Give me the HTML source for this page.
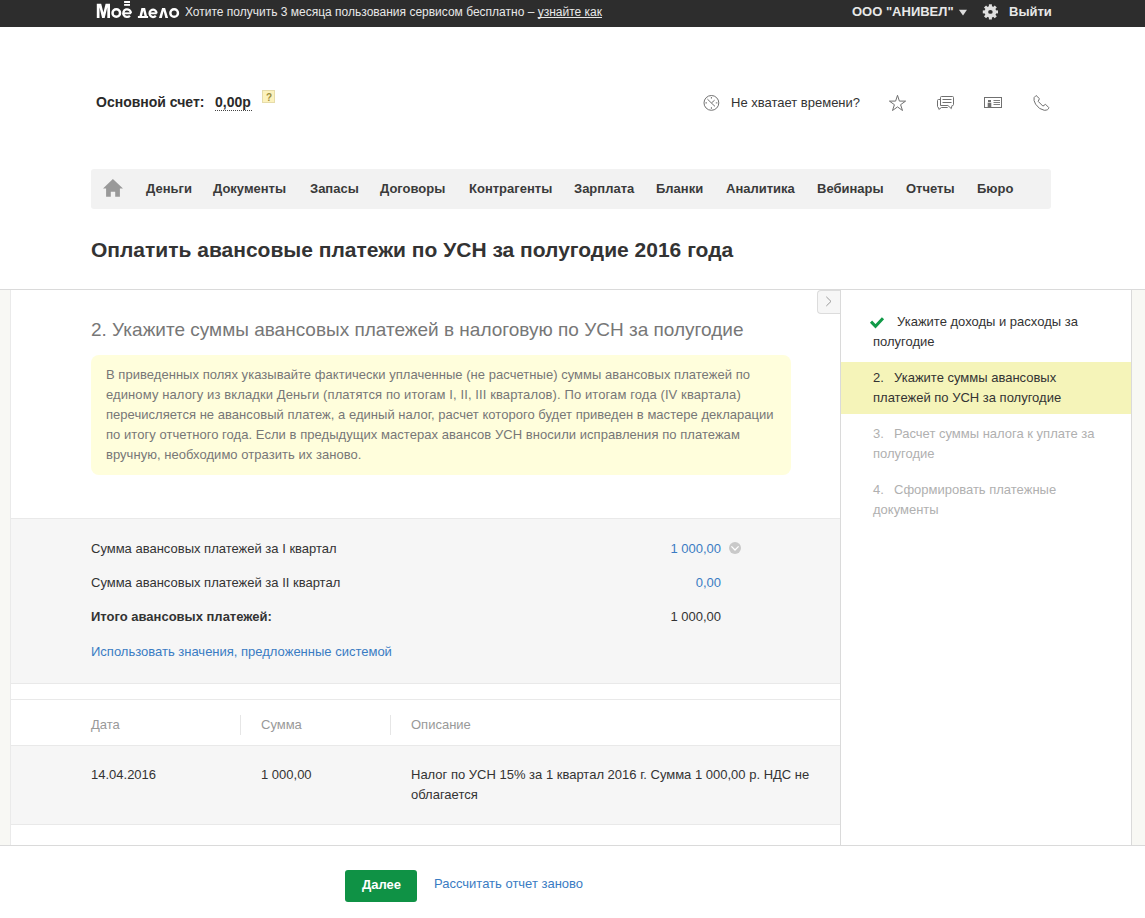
<!DOCTYPE html>
<html><head><meta charset="utf-8">
<style>
*{box-sizing:border-box;margin:0;padding:0}
html,body{width:1145px;height:918px;overflow:hidden;background:#fff;font-family:"Liberation Sans",sans-serif;color:#333}
.abs{position:absolute;white-space:nowrap}
.t13{font-size:13px;line-height:16px}
#top{position:absolute;left:0;top:0;width:1145px;height:27px;background:#2d2d2d}
.promo u{text-decoration-skip-ink:none}
.promo{font-size:12px;color:#e8e8e8;left:185px;top:4px;line-height:16px}
.org{font-size:13px;color:#e8e8e8;left:852px;top:4px;line-height:16px;font-weight:bold}
.exit{font-size:13px;color:#e8e8e8;left:1009px;top:4px;line-height:16px;font-weight:bold}
.acc{font-size:14px;font-weight:bold;color:#2a2a2a;left:96px;top:94px;line-height:16px}
.acc span{position:relative}
.dots{position:absolute;left:215px;top:110px;width:37px;height:1px;border-top:1px dotted #444}
.help{left:262px;top:90px;width:13px;height:13px;background:#fcf2bd;border:1px solid #e6dcaa;font-size:10px;font-weight:bold;color:#9c8c3c;text-align:center;line-height:14px;padding-left:1px}
.time{font-size:13px;color:#333;left:731px;top:95px;line-height:16px}
#nav{position:absolute;left:91px;top:169px;width:960px;height:40px;background:#f2f2f2;border-radius:3px}
.nv{position:absolute;top:181px;font-size:13px;font-weight:bold;color:#3a3a3a;line-height:16px;white-space:nowrap}
h1{position:absolute;left:91px;top:238px;font-size:21px;font-weight:bold;color:#333;line-height:24px;white-space:nowrap}
#hline{position:absolute;left:0;top:289px;width:1145px;height:1px;background:#dadada}
#lstrip{position:absolute;left:0;top:290px;width:11px;height:555px;background:#f8f8f4;border-right:1px solid #eaeaea}
#rstrip{position:absolute;left:1131px;top:290px;width:14px;height:555px;background:#f8f8f4;border-left:1px solid #dadada}
#vline{position:absolute;left:840px;top:290px;width:1px;height:555px;background:#dadada}
#bline{position:absolute;left:0;top:845px;width:1145px;height:1px;background:#dadada}
.h2{font-size:19px;color:#777;left:91px;top:319px;line-height:22px}
#info{position:absolute;left:91px;top:355px;width:700px;height:120px;background:#fffedc;border-radius:8px;padding:10px 15px;font-size:13px;color:#777;line-height:20px;white-space:nowrap}
#gray1{position:absolute;left:11px;top:518px;width:829px;height:166px;background:#f6f6f6;border-top:1px solid #e9e9e9;border-bottom:1px solid #e9e9e9}
.blue{color:#3a7cc3}
#thead{position:absolute;left:11px;top:699px;width:829px;height:47px;border-top:1px solid #e9e9e9;border-bottom:1px solid #e9e9e9;background:#fff}
.th{font-size:13px;color:#999;line-height:16px;top:717px}
.sep{position:absolute;width:1px;height:20px;background:#e6e6e6}
#trow{position:absolute;left:11px;top:746px;width:829px;height:79px;background:#f6f6f6;border-bottom:1px solid #e9e9e9}
.side{font-size:13px;line-height:20px;color:#333}
.side.g{color:#b0b0b0}
.side b{font-weight:normal;display:inline-block;width:21px}
#hl{position:absolute;left:841px;top:362px;width:290px;height:52px;background:#f5f4b9}
#btn{position:absolute;left:345px;top:870px;width:72px;height:32px;background:#0f9245;border-radius:3px}
.btxt{left:362px;top:877px;color:#fff;font-weight:bold;font-size:13px;line-height:16px}
.redo{font-size:13px;color:#3a7cc3;left:434px;top:876px;line-height:16px}
#coll{position:absolute;left:817px;top:290px;width:24px;height:24px;background:#f6f6f6;border:1px solid #dcdcdc;border-right:none;border-radius:4px 0 0 4px}
</style></head><body>
<div id="top">
  <svg class="abs" style="left:0;top:0" width="200" height="27" viewBox="0 0 200 27">
    <g fill="#fff">
      <polygon points="96.8,17.9 96.8,3.8 101.2,3.8 103.4,12.6 105.6,3.8 110,3.8 110,17.9 107.3,17.9 107.3,7.2 104.7,17.9 102.1,17.9 99.5,7.2 99.5,17.9"/>
      <rect x="124.1" y="1" width="5.9" height="2"/>
      <rect x="124.1" y="4" width="5.9" height="1.8"/>
      <path fill-rule="evenodd" d="M141.4,8 L145.1,8 L147,16 L148.1,16 L148.1,18 L137.9,18 L137.9,16 L139.5,16 Z M143.25,10.8 L142,16 L144.5,16 Z"/>
      <polygon points="162.1,8 165.1,8 168.1,18 165.4,18 163.6,11 161.8,18 159,18"/>
    </g>
    <g fill="none" stroke="#fff">
      <circle cx="116.3" cy="12.95" r="3.75" stroke-width="2.5"/>
      <circle cx="174.15" cy="13" r="3.8" stroke-width="2.5"/>
      <path d="M130.9,13.2 A3.8,3.8 0 1 0 129.9,15.7" stroke-width="2.3"/><path d="M123,13.3 H131" stroke-width="1.9"/>
      <path d="M156.6,13.2 A3.55,3.7 0 1 0 155.8,15.7" stroke-width="2.2"/><path d="M149.3,13.3 H156.8" stroke-width="1.9"/>
    </g>
  </svg>
  <div class="abs promo">Хотите получить 3 месяца пользования сервисом бесплатно – <u>узнайте как</u></div>
  <div class="abs org">ООО "АНИВЕЛ"</div>
  <svg class="abs" style="left:950px;top:0" width="60" height="27" viewBox="950 0 60 27">
    <polygon points="958.9,9.8 967,9.8 963,15.4" fill="#dcdcdc"/>
    <g fill="#e0e0e0" transform="translate(990.4 11.9)">
      <circle r="5.9"/>
      <rect x="-1.5" y="-7.6" width="3" height="15.2"/>
      <rect x="-1.5" y="-7.6" width="3" height="15.2" transform="rotate(45)"/>
      <rect x="-1.5" y="-7.6" width="3" height="15.2" transform="rotate(90)"/>
      <rect x="-1.5" y="-7.6" width="3" height="15.2" transform="rotate(135)"/>
      <ellipse rx="2.3" ry="1.9" fill="#2d2d2d"/>
    </g>
  </svg>
  <div class="abs exit">Выйти</div>
</div>

<div class="abs acc">Основной счет:</div><div class="abs acc" style="left:215px">0,00р</div>
<div class="dots"></div>
<div class="abs help">?</div>

<svg class="abs" style="left:690px;top:85px" width="370" height="35" viewBox="690 85 370 35">
  <g fill="none" stroke="#707070" stroke-width="1">
    <circle cx="711.4" cy="102.9" r="7.4"/>
    <path d="M711.4,97 V98.6 M711.4,107.2 V108.8 M705.4,102.9 H707 M715.8,102.9 H717.4"/>
    <path d="M707.4,99.1 L711.4,103 L714.6,100.2 M711.4,103 L715,106.4"/>
    <polygon points="897.5,95.3 899.4,101.1 905.6,101.1 900.6,104.7 902.5,110.5 897.5,106.9 892.5,110.5 894.4,104.7 889.4,101.1 895.6,101.1" stroke-linejoin="miter"/>
    <path d="M940.5,105.5 V97.5 Q940.5,96.5 941.5,96.5 H952.5 Q953.5,96.5 953.5,97.5 V104.5 Q953.5,105.5 952.5,105.5 H952 L951.3,108.6 L947.9,105.5 Z"/>
    <path d="M940.5,99.5 H938.5 Q937.5,99.5 937.5,100.5 V106.5 Q937.5,107.5 938.5,107.5 L938.9,109.4 L941.5,107.5 H947.7"/>
    <path d="M942.5,99.5 H951.5 M942.5,102.5 H951.5"/>
    <rect x="984.5" y="97.5" width="17" height="10"/>
    <path d="M993.5,100.5 H1000 M993.5,102.5 H1000 M993.5,104.5 H1000" stroke="#808080"/>
    <path d="M1036.1,95.5 L1039.4,98.6 L1038.2,101.4 L1042.9,106.1 L1045.5,104.3 L1048.8,107.6 Q1048.6,110.3 1044.3,110.3 Q1039,109.5 1035.6,104.2 Q1033.3,100.2 1034.1,97.6 Z" stroke-linejoin="round"/>
  </g>
  <rect x="988" y="100" width="3" height="2" fill="#707070"/>
  <rect x="987.7" y="102.7" width="3.6" height="4.4" fill="#707070"/>
</svg>
<div class="abs time">Не хватает времени?</div>

<div id="nav"></div>
<svg class="abs" style="left:98px;top:174px" width="30" height="28" viewBox="98 174 30 28">
  <polygon points="103,188.6 112.9,178.9 123,188.6 119.9,188.6 119.9,196.7 115.2,196.7 115.2,191.7 110.8,191.7 110.8,196.7 106.1,196.7 106.1,188.6" fill="#999"/>
</svg>
<div class="nv" style="left:146px">Деньги</div>
<div class="nv" style="left:213px">Документы</div>
<div class="nv" style="left:310px">Запасы</div>
<div class="nv" style="left:380px">Договоры</div>
<div class="nv" style="left:469px">Контрагенты</div>
<div class="nv" style="left:574px">Зарплата</div>
<div class="nv" style="left:656px">Бланки</div>
<div class="nv" style="left:726px">Аналитика</div>
<div class="nv" style="left:817px">Вебинары</div>
<div class="nv" style="left:906px">Отчеты</div>
<div class="nv" style="left:977px">Бюро</div>

<h1>Оплатить авансовые платежи по УСН за полугодие 2016 года</h1>

<div id="hline"></div>
<div id="lstrip"></div>
<div id="rstrip"></div>

<div class="abs h2">2. Укажите суммы авансовых платежей в налоговую по УСН за полугодие</div>
<div id="info"><span style="letter-spacing:0.037px">В приведенных полях указывайте фактически уплаченные (не расчетные) суммы авансовых платежей по</span><br><span style="letter-spacing:0.1px">единому налогу из вкладки Деньги (платятся по итогам I, II, III кварталов). По итогам года (IV квартала)</span><br><span style="letter-spacing:0.03px">перечисляется не авансовый платеж, а единый налог, расчет которого будет приведен в мастере декларации</span><br><span style="letter-spacing:0.05px">по итогу отчетного года. Если в предыдущих мастерах авансов УСН вносили исправления по платежам</span><br><span style="letter-spacing:0.04px">вручную, необходимо отразить их заново.</span></div>

<div id="gray1"></div>
<div class="abs t13" style="left:91px;top:541px">Сумма авансовых платежей за I квартал</div>
<div class="abs t13 blue" style="left:621px;top:541px;width:100px;text-align:right">1 000,00</div>
<svg class="abs" style="left:729px;top:542px" width="12" height="12" viewBox="0 0 12 12">
  <circle cx="6" cy="6" r="6" fill="#c9c9c9"/>
  <path d="M2.4,4.4 L6,8 L9.6,4.4" fill="none" stroke="#fff" stroke-width="1.3"/>
</svg>
<div class="abs t13" style="left:91px;top:575px">Сумма авансовых платежей за II квартал</div>
<div class="abs t13 blue" style="left:621px;top:575px;width:100px;text-align:right">0,00</div>
<div class="abs t13" style="left:91px;top:609px;font-weight:bold">Итого авансовых платежей:</div>
<div class="abs t13" style="left:621px;top:609px;width:100px;text-align:right">1 000,00</div>
<div class="abs t13 blue" style="left:91px;top:644px">Использовать значения, предложенные системой</div>

<div id="thead"></div>
<div class="abs th" style="left:91px;top:717px">Дата</div>
<div class="sep" style="left:240px;top:715px"></div>
<div class="abs th" style="left:261px;top:717px">Сумма</div>
<div class="sep" style="left:390px;top:715px"></div>
<div class="abs th" style="left:411px;top:717px">Описание</div>
<div id="trow"></div>
<div class="abs side" style="left:91px;top:765px">14.04.2016</div>
<div class="abs side" style="left:261px;top:765px">1 000,00</div>
<div class="abs side" style="left:411px;top:765px">Налог по УСН 15% за 1 квартал 2016 г. Сумма 1 000,00 р. НДС не<br>облагается</div>

<div id="coll"></div>
<div id="vline"></div>
<svg class="abs" style="left:817px;top:290px" width="24" height="24" viewBox="0 0 24 24">
  <path d="M9.3,6.8 L14,11.4 L9.3,16" fill="none" stroke="#999" stroke-width="1"/>
</svg>
<div id="bline"></div>

<div id="hl"></div>
<svg class="abs" style="left:868px;top:315px" width="18" height="15" viewBox="868 315 18 15">
  <path d="M871,321.6 L875.5,326.3 L883,318.2" fill="none" stroke="#119a48" stroke-width="3"/>
</svg>
<div class="abs side" style="left:873px;top:312px"><span style="display:inline-block;width:24px"></span>Укажите доходы и расходы за<br>полугодие</div>
<div class="abs side" style="left:873px;top:368px"><b>2.</b>Укажите суммы авансовых<br>платежей по УСН за полугодие</div>
<div class="abs side g" style="left:873px;top:424px"><b>3.</b>Расчет суммы налога к уплате за<br>полугодие</div>
<div class="abs side g" style="left:873px;top:480px"><b>4.</b>Сформировать платежные<br>документы</div>

<div id="btn"></div>
<div class="abs btxt">Далее</div>
<div class="abs redo">Рассчитать отчет заново</div>
</body></html>
